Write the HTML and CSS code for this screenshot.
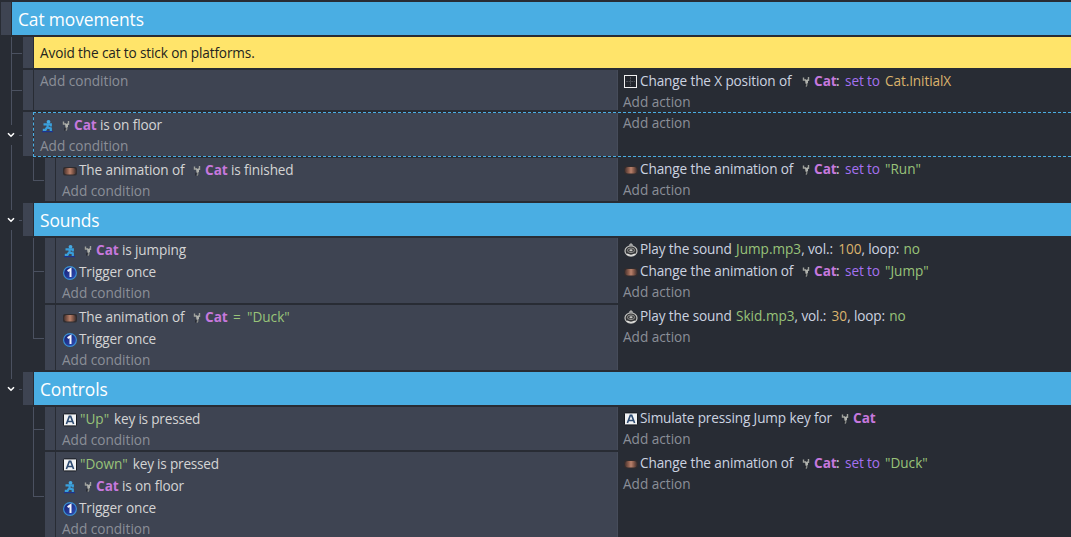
FILE: index.html
```
<!DOCTYPE html>
<html lang="en">
<head>
<meta charset="utf-8">
<title>Events sheet</title>
<link rel="stylesheet" href="styles.css">
</head>
<body>
<svg class="defs" aria-hidden="true">
  <defs>
    <linearGradient id="film"><stop offset="0" stop-color="#49332f"/><stop offset=".3" stop-color="#8d5f4e"/><stop offset=".5" stop-color="#b9826c"/><stop offset=".7" stop-color="#8d5f4e"/><stop offset="1" stop-color="#3f302f"/></linearGradient>
    <linearGradient id="disc" x1="0" y1="0" x2="1" y2="1"><stop offset="0" stop-color="#161f70"/><stop offset="1" stop-color="#2f4fb8"/></linearGradient>
  </defs>
  <symbol id="i-run" viewBox="0 0 14 14"><path d="M1 12.6h11" stroke="#1d3490" stroke-width="1.2"/><circle cx="7.5" cy="2.8" r="1.9" fill="#45a9e2"/><path d="M2.5 5.4h7.3v2M6.6 4.5v4.2l3.2.6v2.8M6 8.4l-1.5 2.4H1.8" fill="none" stroke="#399fdb" stroke-width="2.2"/></symbol>
  <symbol id="i-film" viewBox="0 0 14 14"><rect x="0" y="3" width="14" height="8.5" rx="2" fill="#302c2e"/><rect x="1" y="4" width="12" height="6.5" rx="3" fill="url(#film)"/></symbol>
  <symbol id="i-once" viewBox="0 0 14 14"><circle cx="7" cy="7" r="6.4" fill="url(#disc)" stroke="#3b92d4" stroke-width="1.1"/><path d="M4.6 5.1 7.5 3.2v7.8" fill="none" stroke="#f4f6ff" stroke-width="2"/></symbol>
  <symbol id="i-key" viewBox="0 0 14 14"><rect x=".5" y=".9" width="13" height="12" rx=".8" fill="#f1f2f3" stroke="#16191f"/><path d="M3.4 11 6.3 3.4h1.4L10.6 11M4.8 8.5h4.4" fill="none" stroke="#2d4a70" stroke-width="1.6"/></symbol>
  <symbol id="i-pos" viewBox="0 0 14 14"><rect x=".5" y=".5" width="12" height="12" fill="#22252c" stroke="#f0f0f0"/><path d="M6.5 2v9M2 6.5h9" stroke="#4c4f56" stroke-width="1" stroke-dasharray="2 .6"/></symbol>
  <symbol id="i-sound" viewBox="0 0 14 14"><path d="M5.3 2.6 7 1l1.7 1.6" fill="none" stroke="#aaa" stroke-width="1.4"/><ellipse cx="7" cy="8" rx="6" ry="5.1" fill="#343537" stroke="#c4c4c1" stroke-width="1.2"/><ellipse cx="7" cy="7.3" rx="3.6" ry="2.3" fill="#3c3d3f" stroke="#a5a5a2" stroke-width=".8"/><ellipse cx="7" cy="7.3" rx="1.6" ry="1" fill="#c8c8c5"/><path d="M3 11.2q4 2.4 8 0" fill="none" stroke="#e0e0de" stroke-width="1.4"/></symbol>
  <symbol id="i-cat" viewBox="0 0 8 12"><path d="M1.5 1.5v2.5h2.5M6.5 1v3.2H5" fill="none" stroke="#a0a29d" stroke-width="1.4"/><path d="M3 3.8h3v2.6L5 8H3.6z" fill="#b0b2ad"/><path d="M4.8 7.5V9L4 10.6" fill="none" stroke="#888a86" stroke-width="1.3"/><path d="M3 7.5 2.6 10.5" stroke="#24262b"/></symbol>
  <symbol id="i-chev" viewBox="0 0 8 6"><path d="m1 1.2 3 3 3-3" fill="none" stroke="#fff" stroke-width="1.6"/></symbol>
</svg>
<main class="sheet">
  <section class="row root">
    <i class="handle"></i><h1 class="group">Cat movements</h1>
  </section>

  <section class="row">
    <div class="gutter tick comment-tick"></div><i class="handle"></i><p class="comment"><span class="t">Avoid the cat to stick on platforms.</span></p>
  </section>

  <section class="row">
    <div class="gutter tick"></div><i class="handle"></i>
    <div class="conds"><p class="add">Add condition</p></div>
    <div class="acts">
      <p class="line"><svg class="ic"><use href="#i-pos"/></svg><span class="t w-pos">Change the X position of</span><svg class="cat"><use href="#i-cat"/></svg><b>Cat</b><span class="colon">:</span><em class="op">set to</em><span class="num">Cat.InitialX</span></p>
      <p class="add">Add action</p>
    </div>
  </section>

  <section class="row selected">
    <div class="gutter fold"><svg class="chev"><use href="#i-chev"/></svg></div><i class="handle"></i>
    <div class="outline">
      <div class="conds">
        <p class="line"><svg class="ic"><use href="#i-run"/></svg><svg class="cat"><use href="#i-cat"/></svg><b>Cat</b><span class="t after">is on floor</span></p>
        <p class="add">Add condition</p>
      </div>
      <div class="acts"><p class="add">Add action</p></div>
    </div>
  </section>

  <section class="row sub">
    <div class="gutter"></div><div class="gutter inner last"></div><i class="handle"></i>
    <div class="conds">
      <p class="line"><svg class="ic"><use href="#i-film"/></svg><span class="t w-the">The animation of</span><svg class="cat"><use href="#i-cat"/></svg><b>Cat</b><span class="t after">is finished</span></p>
      <p class="add">Add condition</p>
    </div>
    <div class="acts">
      <p class="line"><svg class="ic"><use href="#i-film"/></svg><span class="t w-pos">Change the animation of</span><svg class="cat"><use href="#i-cat"/></svg><b>Cat</b><span class="colon">:</span><em class="op">set to</em><span class="str">"Run"</span></p>
      <p class="add">Add action</p>
    </div>
  </section>

  <section class="row">
    <div class="gutter fold"><svg class="chev"><use href="#i-chev"/></svg></div><i class="handle"></i><h2 class="group">Sounds</h2>
  </section>

  <section class="row sub">
    <div class="gutter"></div><div class="gutter inner tick"></div><i class="handle"></i>
    <div class="conds">
      <p class="line"><svg class="ic"><use href="#i-run"/></svg><svg class="cat"><use href="#i-cat"/></svg><b>Cat</b><span class="t after">is jumping</span></p>
      <p class="line"><svg class="ic"><use href="#i-once"/></svg><span class="t">Trigger once</span></p>
      <p class="add">Add condition</p>
    </div>
    <div class="acts">
      <p class="line"><svg class="ic"><use href="#i-sound"/></svg><span class="t w-play">Play the sound</span><span class="file">Jump.mp3</span><span class="t w-vol">, vol.:</span><span class="val">100</span><span class="t w-loop">, loop:</span><span class="file">no</span></p>
      <p class="line"><svg class="ic"><use href="#i-film"/></svg><span class="t w-pos">Change the animation of</span><svg class="cat"><use href="#i-cat"/></svg><b>Cat</b><span class="colon">:</span><em class="op">set to</em><span class="str">"Jump"</span></p>
      <p class="add">Add action</p>
    </div>
  </section>

  <section class="row sub">
    <div class="gutter"></div><div class="gutter inner last"></div><i class="handle"></i>
    <div class="conds">
      <p class="line"><svg class="ic"><use href="#i-film"/></svg><span class="t w-the">The animation of</span><svg class="cat"><use href="#i-cat"/></svg><b>Cat</b><span class="str eq">=</span><span class="str">"Duck"</span></p>
      <p class="line"><svg class="ic"><use href="#i-once"/></svg><span class="t">Trigger once</span></p>
      <p class="add">Add condition</p>
    </div>
    <div class="acts">
      <p class="line"><svg class="ic"><use href="#i-sound"/></svg><span class="t w-play">Play the sound</span><span class="file">Skid.mp3</span><span class="t w-vol">, vol.:</span><span class="val">30</span><span class="t w-loop">, loop:</span><span class="file">no</span></p>
      <p class="add">Add action</p>
    </div>
  </section>

  <section class="row">
    <div class="gutter fold end"><svg class="chev"><use href="#i-chev"/></svg></div><i class="handle"></i><h2 class="group">Controls</h2>
  </section>

  <section class="row sub">
    <div class="gutter none"></div><div class="gutter inner tick"></div><i class="handle"></i>
    <div class="conds">
      <p class="line"><svg class="ic"><use href="#i-key"/></svg><span class="str lead">"Up"</span><span class="t key">key is pressed</span></p>
      <p class="add">Add condition</p>
    </div>
    <div class="acts">
      <p class="line"><svg class="ic"><use href="#i-key"/></svg><span class="t w-sim">Simulate pressing Jump key for</span><svg class="cat"><use href="#i-cat"/></svg><b>Cat</b></p>
      <p class="add">Add action</p>
    </div>
  </section>

  <section class="row sub">
    <div class="gutter none"></div><div class="gutter inner last"></div><i class="handle"></i>
    <div class="conds">
      <p class="line"><svg class="ic"><use href="#i-key"/></svg><span class="str lead">"Down"</span><span class="t key">key is pressed</span></p>
      <p class="line"><svg class="ic"><use href="#i-run"/></svg><svg class="cat"><use href="#i-cat"/></svg><b>Cat</b><span class="t after">is on floor</span></p>
      <p class="line"><svg class="ic"><use href="#i-once"/></svg><span class="t">Trigger once</span></p>
      <p class="add">Add condition</p>
    </div>
    <div class="acts">
      <p class="line"><svg class="ic"><use href="#i-film"/></svg><span class="t w-pos">Change the animation of</span><svg class="cat"><use href="#i-cat"/></svg><b>Cat</b><span class="colon">:</span><em class="op">set to</em><span class="str">"Duck"</span></p>
      <p class="add">Add action</p>
    </div>
  </section>
</main>
</body>
</html>
```
FILE: styles.css
```
* { box-sizing: border-box; margin: 0; padding: 0; }
html, body { height: 537px; overflow: hidden; background: #282c34; }
body { font: 13.6px/20px "Open Sans", "Noto Sans", sans-serif; color: #d4d4d4; }
.defs { display: block; width: 0; height: 0; }
.sheet { display: flex; flex-direction: column; padding-top: 2px; }

.row { display: flex; flex: none; padding-left: 11px; }
.row.root { padding-left: 1px; }
.handle { flex: none; width: 11px; background: #3e4452; border-right: 1px solid #282c34; margin-bottom: 2px; }

/* Tree connectors */
.gutter { flex: none; width: 12px; position: relative; background: linear-gradient(#4b5160, #4b5160) left / 1px 100% no-repeat; }
.sub > .gutter:first-child { width: 22px; }
.gutter.none { background: none; }
.gutter.tick::after, .gutter.last::after { content: ""; position: absolute; left: 0; top: calc(50% - 1px); width: 11px; height: 1px; background: #4b5160; }
.gutter.comment-tick::after { top: 16px; }
.gutter.last { background-size: 1px 50%; background-position: left top; }
.gutter.fold::after { content: ""; position: absolute; left: 8px; top: 17px; width: 3px; height: 1px; background: #4b5160; }
.selected .gutter.fold::after { top: 23px; }
.chev { position: absolute; left: -4px; top: 7px; width: 8px; height: 20px; padding: 7px 0; background: #282c34; }
.selected .chev { top: 13px; }
.gutter.fold.end { background-size: 1px 30%; background-position: left top; }

.group { flex: 1; height: 33px; margin-bottom: 2px; padding-left: 6px; background: #4aaee3; color: #fff; font-size: 17.4px; font-weight: 400; line-height: 35px; letter-spacing: -.12px; }
.comment { flex: 1; height: 31px; margin-bottom: 2px; padding-left: 6px; background: #ffe46a; color: #242420; line-height: 32px; }

.conds { flex: none; width: 584px; padding: 1px 0 2px 6px; margin-bottom: 2px; background: #3e4452; border-right: 1px solid #464c5a; }
.sub .conds { width: 562px; }
.acts { flex: 1; padding-left: 5px; margin-bottom: 2px; color: #ccd3e0; }
.add { height: 18px; line-height: 20px; color: #8b8f98; white-space: nowrap; }
.line { display: flex; align-items: center; height: 22px; white-space: nowrap; }
.line > * { flex: none; }
.outline { flex: 1; display: flex; margin: 0 0 1px -1px; border: 1px dashed #4aaee3; border-right: 0; height: 45px; }
.outline .conds, .outline .acts { margin: 0; }

.t { letter-spacing: -.13px; }
.ic { width: 14px; height: 14px; margin: 1px 2px 0 1px; }
.cat { width: 8px; height: 12px; margin: 1px 4px 0 5px; }
b { width: 22px; color: #c678dd; font-weight: 700; }
.after { margin-left: 4px; }
.colon { width: 9px; }
.op { width: 40px; font-style: normal; color: #a571f0; letter-spacing: -.1px; }
.num, .val { color: #dbb36c; }
.num { letter-spacing: -.1px; }
.val { font-weight: 500; }
.str, .file { color: #98c379; }
.lead { margin-left: 1px; }
.eq { width: 14px; margin-left: 6px; }
.key { margin-left: 5px; letter-spacing: -.2px; }
.w-pos { width: 157px; }
.w-the { width: 109px; }
.w-play { width: 96px; }
.w-vol { width: 37px; }
.w-loop { width: 42px; }
.w-sim { width: 196px; }
```
